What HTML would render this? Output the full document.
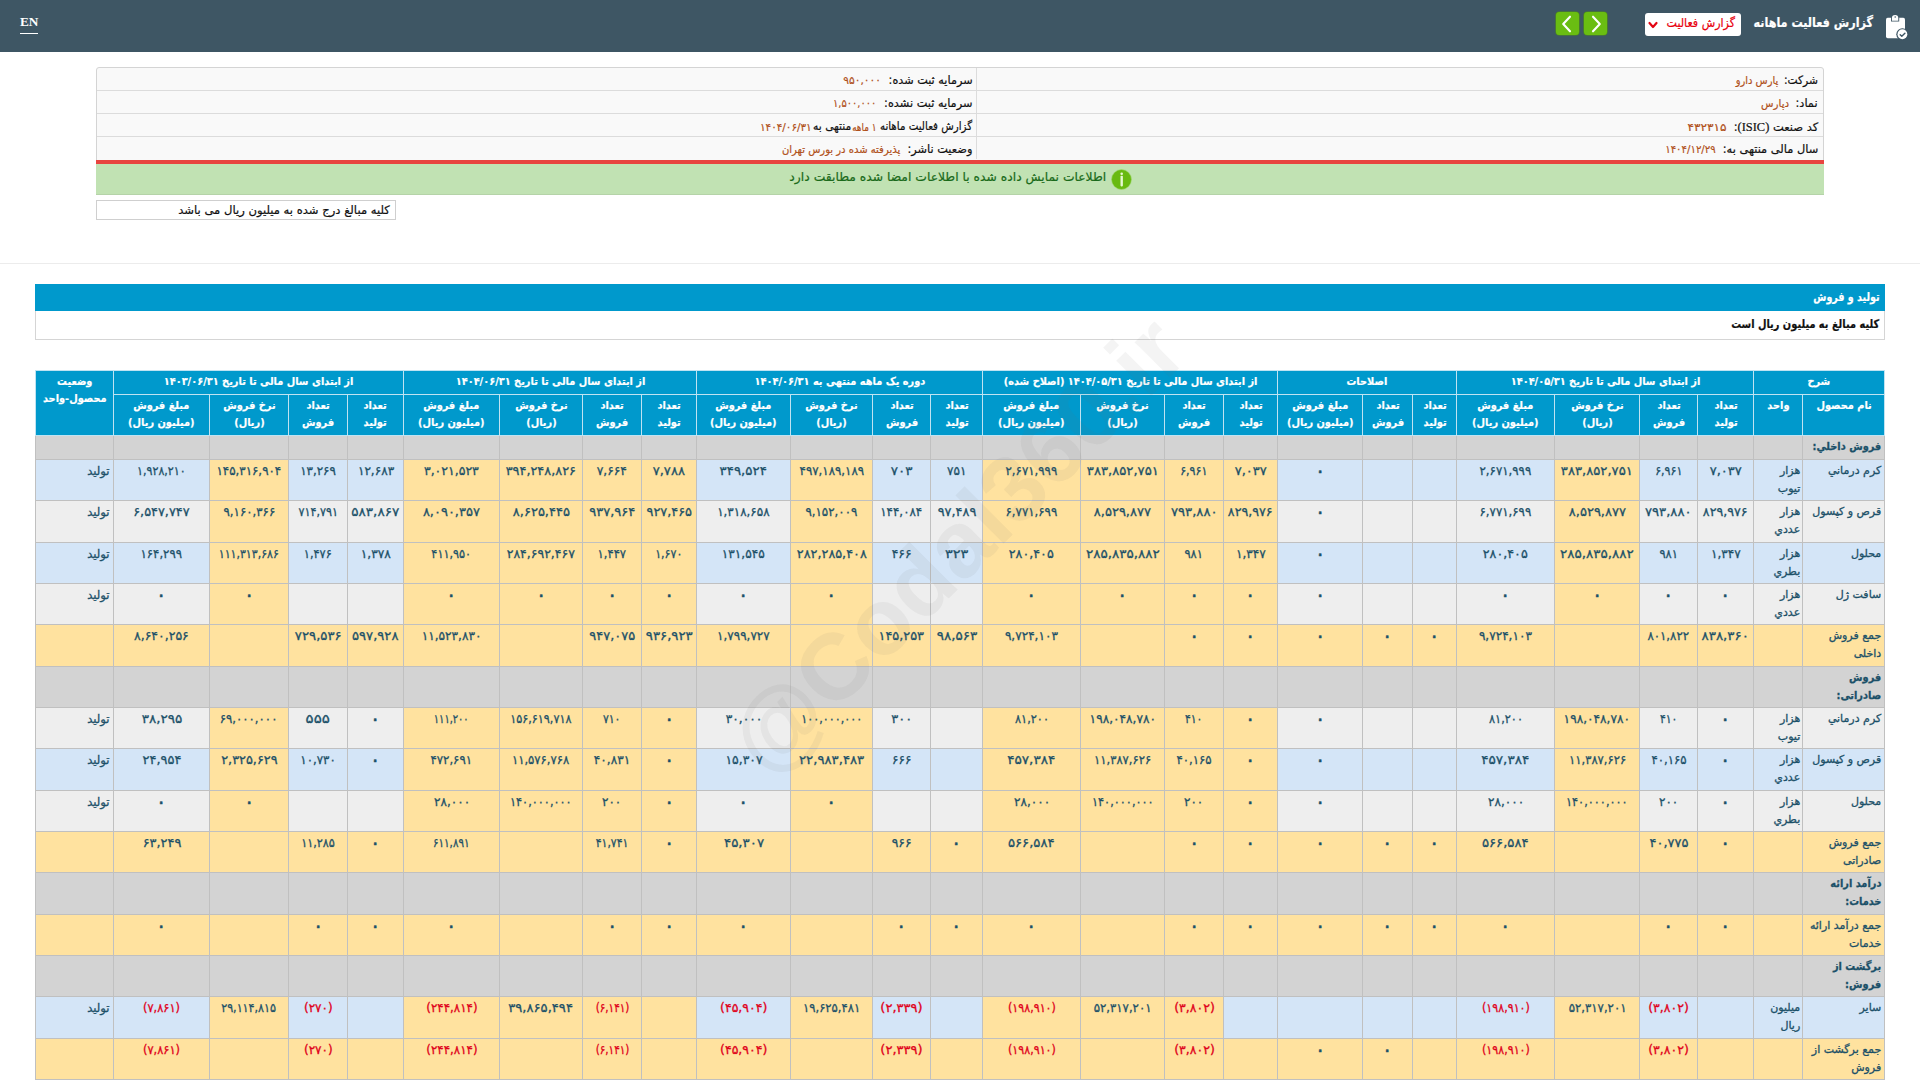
<!DOCTYPE html>
<html lang="fa" dir="rtl">
<head>
<meta charset="utf-8">
<title>گزارش فعالیت ماهانه</title>
<style>
html,body{margin:0;padding:0;background:#fff;}
body{width:1920px;height:1080px;overflow:hidden;position:relative;direction:rtl;font-family:"DejaVu Sans","Liberation Sans",sans-serif;font-size:12px;color:#000;}
.abs{position:absolute;}
.f{position:absolute;white-space:nowrap;line-height:1;transform-origin:100% 50%;direction:rtl;-webkit-text-stroke:0.2px;}
#top{left:0;top:0;width:1920px;height:51.5px;background:#3e5664;}
#sel{left:1645px;top:13px;width:96px;height:23px;background:#fff;border-radius:3px;}
.gb{top:12px;width:23px;height:23px;background:#6abd12;border-radius:3.5px;box-shadow:0 0 0 0.6px #4f8f14;}
#en{left:20px;top:13.5px;color:#fff;font-family:"Liberation Serif",serif;font-size:13.3px;font-weight:bold;line-height:16px;border-bottom:1px solid #fff;padding-bottom:3px;direction:ltr;}
#info{left:96px;top:67px;width:1728px;height:94px;background:#f9f9f9;border:1px solid #d4d4d4;box-sizing:border-box;border-radius:3px 3px 0 0;}
#info .r{position:absolute;left:0;right:0;height:23px;border-bottom:1px solid #dcdcdc;box-sizing:border-box;}
#redline{left:96px;top:160px;width:1728px;height:4px;background:#e8443f;}
#green{left:96px;top:164px;width:1728px;height:30.5px;background:#c1e2b3;border-bottom:1px solid #b5d3a8;box-sizing:border-box;}
#note{left:96px;top:200px;width:300px;height:20px;border:1px solid #cfcfcf;box-sizing:border-box;line-height:17px;font-size:11.5px;white-space:nowrap;}
#sep{left:0;top:263px;width:1920px;height:1px;background:#ececec;}
#sec{left:35px;top:284px;width:1850px;height:27px;background:#0099cc;color:#fff;font-weight:bold;line-height:26px;}
#sub{left:35px;top:311px;width:1850px;height:29px;border:1px solid #d5d5d5;border-top:none;box-sizing:border-box;font-weight:bold;line-height:28px;}
table{position:absolute;left:35px;top:370px;width:1849px;border-collapse:collapse;table-layout:fixed;direction:rtl;}
th,td{box-sizing:border-box;padding:0;overflow:hidden;}
th{background:#0099cc;color:#fff;font-weight:bold;border:1px solid #bfe3f2;text-align:center;vertical-align:top;font-size:11px;line-height:16.5px;white-space:nowrap;padding:3px 0 0 0;}
th span{display:inline-block;transform:scaleX(0.89);transform-origin:50% 50%;-webkit-text-stroke:0.2px;}
tr.h1 th{height:24px;}
tr.h2 th{height:40.5px;}
td{border:1px solid #c0c0c0;color:#1b5068;text-align:center;vertical-align:top;font-size:12px;line-height:18px;white-space:nowrap;padding:2px 2px 0 2px;height:41.33px;-webkit-text-stroke:0.3px;}
tr.h td{background:#d3d3d3;height:24.5px;font-weight:bold;}
tr.h.h2 td{height:41.33px;}
tr.b td{background:#d4e5f7;}
tr.g td{background:#eeeeee;}
tr.s td{background:#ffe29f;}
td.y{background:#ffe29f !important;}
td.neg{color:#e0001a;}
td.nm,td.un,td.st{text-align:right;font-size:11px;}
td span{display:inline-block;transform:scaleX(1.1);transform-origin:50% 50%;}
td span.z{transform:scale(1.6);}
td.nm span,td.un span,td.st span{transform:none;}
td.nm{padding-right:3px;}
td.st{padding-right:3.5px;font-size:11.6px;}
tr.h td.nm span{transform:scaleX(0.89);transform-origin:100% 50%;}
#wm{left:557px;top:475px;width:800px;height:140px;line-height:140px;text-align:center;font-family:"Liberation Sans",sans-serif;font-size:94px;font-weight:bold;color:rgba(110,110,110,0.075);transform:rotate(-45deg);direction:ltr;white-space:nowrap;pointer-events:none;}
</style>
</head>
<body>
<div id="top" class="abs">
  <div id="en" class="abs">EN</div>
  <div class="abs gb" style="left:1556px"><svg width="23" height="23" viewBox="0 0 23 23"><path d="M14 4.7 L7.2 12 L14 19.3" fill="none" stroke="#fff" stroke-width="2.1" stroke-linecap="round" stroke-linejoin="round"/></svg></div>
  <div class="abs gb" style="left:1584px"><svg width="23" height="23" viewBox="0 0 23 23"><path d="M9 4.7 L15.8 12 L9 19.3" fill="none" stroke="#fff" stroke-width="2.1" stroke-linecap="round" stroke-linejoin="round"/></svg></div>
  <div id="sel" class="abs"><svg class="abs" style="left:2.5px;top:7.5px" width="10" height="9" viewBox="0 0 10 9"><path d="M1.5 2 L5 6 L8.5 2" fill="none" stroke="#e30613" stroke-width="2.2" stroke-linecap="round" stroke-linejoin="round"/></svg></div>
  
  <svg class="abs" style="left:1884px;top:12px" width="28" height="30" viewBox="0 0 28 30"><rect x="2" y="5.7" width="19" height="20.5" rx="1.7" fill="#fff"/><path d="M7 9.6 V6.2 a4.1 4.1 0 0 1 8.2 0 V9.6 Z" fill="#3e5664"/><path d="M7.9 8.7 V6.1 a3.2 3.2 0 0 1 6.4 0 V8.7 Z" fill="#fff"/><circle cx="11.2" cy="5" r="0.75" fill="#3e5664"/><circle cx="18.4" cy="22.25" r="6.1" fill="#3e5664"/><circle cx="18.4" cy="22.25" r="4.9" fill="#fff"/><path d="M16.2 22.7 l1.6 1.5 l3.1 -3" fill="none" stroke="#3e5664" stroke-width="1.4" stroke-linecap="round" stroke-linejoin="round"/></svg>
</div>

<div id="info" class="abs">
  <div class="r" style="top:0"></div><div class="r" style="top:23px"></div><div class="r" style="top:46px"></div>
  <div class="abs" style="left:879px;top:0;width:1px;height:91px;background:#dcdcdc"></div>
</div>
<div id="redline" class="abs"></div>
<div id="green" class="abs">
  
  <svg class="abs" style="left:1014.5px;top:4.7px" width="21" height="21" viewBox="0 0 21 21"><circle cx="10.5" cy="10.5" r="10" fill="#68ba10" stroke="#a5dc7a" stroke-width="0.6"/><circle cx="10.7" cy="4.8" r="1.3" fill="#e6f8d2"/><rect x="9.5" y="6.8" width="2.4" height="10.6" rx="0.8" fill="#e6f8d2"/></svg>
</div>
<div id="note" class="abs"></div>
<div id="sep" class="abs"></div>
<div id="sec" class="abs"></div>
<div id="sub" class="abs"></div>

<table>
<colgroup><col style="width:82px"><col style="width:49px"><col style="width:56px"><col style="width:58px"><col style="width:85px"><col style="width:98px"><col style="width:44px"><col style="width:50px"><col style="width:85px"><col style="width:54px"><col style="width:59px"><col style="width:84px"><col style="width:98px"><col style="width:52px"><col style="width:58px"><col style="width:82px"><col style="width:94px"><col style="width:55px"><col style="width:59px"><col style="width:83px"><col style="width:96px"><col style="width:56px"><col style="width:59px"><col style="width:79px"><col style="width:96px"><col style="width:78px"></colgroup>
<thead>
<tr class="h1"><th colspan="2"><span>شرح</span></th><th colspan="4"><span>از ابتدای سال مالی تا تاریخ ۱۴۰۴/۰۵/۳۱</span></th><th colspan="3"><span>اصلاحات</span></th><th colspan="4"><span>از ابتدای سال مالی تا تاریخ ۱۴۰۴/۰۵/۳۱ (اصلاح شده)</span></th><th colspan="4"><span>دوره یک ماهه منتهی به ۱۴۰۴/۰۶/۳۱</span></th><th colspan="4"><span>از ابتدای سال مالی تا تاریخ ۱۴۰۴/۰۶/۳۱</span></th><th colspan="4"><span>از ابتدای سال مالی تا تاریخ ۱۴۰۳/۰۶/۳۱</span></th><th rowspan="2"><span>وضعیت<br>محصول-واحد</span></th></tr>
<tr class="h2"><th><span>نام محصول</span></th><th><span>واحد</span></th><th><span>تعداد<br>تولید</span></th><th><span>تعداد<br>فروش</span></th><th><span>نرخ فروش<br>(ریال)</span></th><th><span>مبلغ فروش<br>(میلیون ریال)</span></th><th><span>تعداد<br>تولید</span></th><th><span>تعداد<br>فروش</span></th><th><span>مبلغ فروش<br>(میلیون ریال)</span></th><th><span>تعداد<br>تولید</span></th><th><span>تعداد<br>فروش</span></th><th><span>نرخ فروش<br>(ریال)</span></th><th><span>مبلغ فروش<br>(میلیون ریال)</span></th><th><span>تعداد<br>تولید</span></th><th><span>تعداد<br>فروش</span></th><th><span>نرخ فروش<br>(ریال)</span></th><th><span>مبلغ فروش<br>(میلیون ریال)</span></th><th><span>تعداد<br>تولید</span></th><th><span>تعداد<br>فروش</span></th><th><span>نرخ فروش<br>(ریال)</span></th><th><span>مبلغ فروش<br>(میلیون ریال)</span></th><th><span>تعداد<br>تولید</span></th><th><span>تعداد<br>فروش</span></th><th><span>نرخ فروش<br>(ریال)</span></th><th><span>مبلغ فروش<br>(میلیون ریال)</span></th></tr>
</thead>
<tbody>
<tr class="h"><td class="nm"><span>فروش داخلي:</span></td><td></td><td></td><td></td><td></td><td></td><td></td><td></td><td></td><td></td><td></td><td></td><td></td><td></td><td></td><td></td><td></td><td></td><td></td><td></td><td></td><td></td><td></td><td></td><td></td><td></td></tr>
<tr class="b"><td class="nm"><span>کرم درماني</span></td><td class="un"><span>هزار<br>تیوب</span></td><td><span style="transform:scaleX(1.085)">۷,۰۳۷</span></td><td><span style="transform:scaleX(0.922)">۶,۹۶۱</span></td><td class="y"><span style="transform:scaleX(1.096)">۳۸۳,۸۵۲,۷۵۱</span></td><td><span style="transform:scaleX(0.981)">۲,۶۷۱,۹۹۹</span></td><td></td><td></td><td><span class="z">۰</span></td><td class="y"><span style="transform:scaleX(1.085)">۷,۰۳۷</span></td><td class="y"><span style="transform:scaleX(0.922)">۶,۹۶۱</span></td><td class="y"><span style="transform:scaleX(1.096)">۳۸۳,۸۵۲,۷۵۱</span></td><td class="y"><span style="transform:scaleX(0.981)">۲,۶۷۱,۹۹۹</span></td><td><span style="transform:scaleX(0.998)">۷۵۱</span></td><td><span style="transform:scaleX(1.125)">۷۰۳</span></td><td class="y"><span style="transform:scaleX(0.983)">۴۹۷,۱۸۹,۱۸۹</span></td><td><span style="transform:scaleX(1.112)">۳۴۹,۵۲۴</span></td><td class="y"><span style="transform:scaleX(1.090)">۷,۷۸۸</span></td><td class="y"><span style="transform:scaleX(1.024)">۷,۶۶۴</span></td><td class="y"><span style="transform:scaleX(1.071)">۳۹۴,۲۴۸,۸۲۶</span></td><td class="y"><span style="transform:scaleX(1.041)">۳,۰۲۱,۵۲۳</span></td><td><span style="transform:scaleX(1.005)">۱۲,۶۸۳</span></td><td><span style="transform:scaleX(0.993)">۱۳,۲۶۹</span></td><td class="y"><span style="transform:scaleX(0.988)">۱۴۵,۳۱۶,۹۰۴</span></td><td><span style="transform:scaleX(0.922)">۱,۹۲۸,۲۱۰</span></td><td class="st"><span>تولید</span></td></tr>
<tr class="g"><td class="nm"><span>قرص و کپسول</span></td><td class="un"><span>هزار<br>عددي</span></td><td><span style="transform:scaleX(1.055)">۸۲۹,۹۷۶</span></td><td><span style="transform:scaleX(1.100)">۷۹۳,۸۸۰</span></td><td class="y"><span style="transform:scaleX(1.084)">۸,۵۲۹,۸۷۷</span></td><td><span style="transform:scaleX(0.981)">۶,۷۷۱,۶۹۹</span></td><td></td><td></td><td><span class="z">۰</span></td><td class="y"><span style="transform:scaleX(1.055)">۸۲۹,۹۷۶</span></td><td class="y"><span style="transform:scaleX(1.100)">۷۹۳,۸۸۰</span></td><td class="y"><span style="transform:scaleX(1.084)">۸,۵۲۹,۸۷۷</span></td><td class="y"><span style="transform:scaleX(0.981)">۶,۷۷۱,۶۹۹</span></td><td><span style="transform:scaleX(1.074)">۹۷,۴۸۹</span></td><td><span style="transform:scaleX(0.988)">۱۴۴,۰۸۴</span></td><td class="y"><span style="transform:scaleX(0.983)">۹,۱۵۲,۰۰۹</span></td><td><span style="transform:scaleX(0.993)">۱,۳۱۸,۶۵۸</span></td><td class="y"><span style="transform:scaleX(1.071)">۹۲۷,۴۶۵</span></td><td class="y"><span style="transform:scaleX(1.086)">۹۳۷,۹۶۴</span></td><td class="y"><span style="transform:scaleX(1.083)">۸,۶۲۵,۴۴۵</span></td><td class="y"><span style="transform:scaleX(1.080)">۸,۰۹۰,۳۵۷</span></td><td><span style="transform:scaleX(1.130)">۵۸۳,۸۶۷</span></td><td><span style="transform:scaleX(0.933)">۷۱۴,۷۹۱</span></td><td class="y"><span style="transform:scaleX(0.979)">۹,۱۶۰,۳۶۶</span></td><td><span style="transform:scaleX(1.069)">۶,۵۴۷,۷۴۷</span></td><td class="st"><span>تولید</span></td></tr>
<tr class="b"><td class="nm"><span>محلول</span></td><td class="un"><span>هزار<br>بطري</span></td><td><span style="transform:scaleX(1.007)">۱,۳۴۷</span></td><td><span style="transform:scaleX(0.955)">۹۸۱</span></td><td class="y"><span style="transform:scaleX(1.124)">۲۸۵,۸۳۵,۸۸۲</span></td><td><span style="transform:scaleX(1.057)">۲۸۰,۴۰۵</span></td><td></td><td></td><td><span class="z">۰</span></td><td class="y"><span style="transform:scaleX(1.007)">۱,۳۴۷</span></td><td class="y"><span style="transform:scaleX(0.955)">۹۸۱</span></td><td class="y"><span style="transform:scaleX(1.124)">۲۸۵,۸۳۵,۸۸۲</span></td><td class="y"><span style="transform:scaleX(1.057)">۲۸۰,۴۰۵</span></td><td><span style="transform:scaleX(1.207)">۳۲۳</span></td><td><span style="transform:scaleX(1.031)">۴۶۶</span></td><td class="y"><span style="transform:scaleX(1.065)">۲۸۲,۲۸۵,۴۰۸</span></td><td><span style="transform:scaleX(1.010)">۱۳۱,۵۴۵</span></td><td class="y"><span style="transform:scaleX(0.920)">۱,۶۷۰</span></td><td class="y"><span style="transform:scaleX(0.961)">۱,۴۴۷</span></td><td class="y"><span style="transform:scaleX(1.039)">۲۸۴,۶۹۲,۴۶۷</span></td><td class="y"><span style="transform:scaleX(0.936)">۴۱۱,۹۵۰</span></td><td><span style="transform:scaleX(1.020)">۱,۳۷۸</span></td><td><span style="transform:scaleX(0.944)">۱,۴۷۶</span></td><td class="y"><span style="transform:scaleX(0.914)">۱۱۱,۳۱۳,۶۸۶</span></td><td><span style="transform:scaleX(0.975)">۱۶۴,۲۹۹</span></td><td class="st"><span>تولید</span></td></tr>
<tr class="g"><td class="nm"><span>سافت ژل</span></td><td class="un"><span>هزار<br>عددي</span></td><td><span class="z">۰</span></td><td><span class="z">۰</span></td><td class="y"><span class="z">۰</span></td><td><span class="z">۰</span></td><td></td><td></td><td><span class="z">۰</span></td><td class="y"><span class="z">۰</span></td><td class="y"><span class="z">۰</span></td><td class="y"><span class="z">۰</span></td><td class="y"><span class="z">۰</span></td><td></td><td></td><td class="y"><span class="z">۰</span></td><td><span class="z">۰</span></td><td class="y"><span class="z">۰</span></td><td class="y"><span class="z">۰</span></td><td class="y"><span class="z">۰</span></td><td class="y"><span class="z">۰</span></td><td></td><td></td><td class="y"><span class="z">۰</span></td><td><span class="z">۰</span></td><td class="st"><span>تولید</span></td></tr>
<tr class="s"><td class="nm"><span>جمع فروش<br>داخلی</span></td><td class="un"></td><td><span style="transform:scaleX(1.117)">۸۳۸,۳۶۰</span></td><td><span style="transform:scaleX(0.981)">۸۰۱,۸۲۲</span></td><td></td><td><span style="transform:scaleX(1.004)">۹,۷۲۴,۱۰۳</span></td><td><span class="z">۰</span></td><td><span class="z">۰</span></td><td><span class="z">۰</span></td><td><span class="z">۰</span></td><td><span class="z">۰</span></td><td></td><td><span style="transform:scaleX(1.004)">۹,۷۲۴,۱۰۳</span></td><td><span style="transform:scaleX(1.124)">۹۸,۵۶۳</span></td><td><span style="transform:scaleX(1.070)">۱۴۵,۲۵۳</span></td><td></td><td><span style="transform:scaleX(0.996)">۱,۷۹۹,۷۲۷</span></td><td><span style="transform:scaleX(1.106)">۹۳۶,۹۲۳</span></td><td><span style="transform:scaleX(1.078)">۹۴۷,۰۷۵</span></td><td></td><td><span style="transform:scaleX(1.010)">۱۱,۵۲۳,۸۳۰</span></td><td><span style="transform:scaleX(1.092)">۵۹۷,۹۲۸</span></td><td><span style="transform:scaleX(1.103)">۷۲۹,۵۳۶</span></td><td></td><td><span style="transform:scaleX(1.039)">۸,۶۴۰,۲۵۶</span></td><td class="st"></td></tr>
<tr class="h h2"><td class="nm"><span>فروش<br>صادراتی:</span></td><td></td><td></td><td></td><td></td><td></td><td></td><td></td><td></td><td></td><td></td><td></td><td></td><td></td><td></td><td></td><td></td><td></td><td></td><td></td><td></td><td></td><td></td><td></td><td></td><td></td></tr>
<tr class="g"><td class="nm"><span>کرم درماني</span></td><td class="un"><span>هزار<br>تیوب</span></td><td><span class="z">۰</span></td><td><span style="transform:scaleX(0.899)">۴۱۰</span></td><td class="y"><span style="transform:scaleX(1.012)">۱۹۸,۰۴۸,۷۸۰</span></td><td><span style="transform:scaleX(0.942)">۸۱,۲۰۰</span></td><td></td><td></td><td><span class="z">۰</span></td><td class="y"><span class="z">۰</span></td><td class="y"><span style="transform:scaleX(0.899)">۴۱۰</span></td><td class="y"><span style="transform:scaleX(1.012)">۱۹۸,۰۴۸,۷۸۰</span></td><td class="y"><span style="transform:scaleX(0.942)">۸۱,۲۰۰</span></td><td></td><td><span style="transform:scaleX(1.082)">۳۰۰</span></td><td class="y"><span style="transform:scaleX(0.928)">۱۰۰,۰۰۰,۰۰۰</span></td><td><span style="transform:scaleX(1.020)">۳۰,۰۰۰</span></td><td class="y"><span class="z">۰</span></td><td class="y"><span style="transform:scaleX(0.906)">۷۱۰</span></td><td class="y"><span style="transform:scaleX(0.934)">۱۵۶,۶۱۹,۷۱۸</span></td><td class="y"><span style="transform:scaleX(0.819)">۱۱۱,۲۰۰</span></td><td><span class="z">۰</span></td><td><span style="transform:scaleX(1.252)">۵۵۵</span></td><td class="y"><span style="transform:scaleX(0.974)">۶۹,۰۰۰,۰۰۰</span></td><td><span style="transform:scaleX(1.128)">۳۸,۲۹۵</span></td><td class="st"><span>تولید</span></td></tr>
<tr class="b"><td class="nm"><span>قرص و کپسول</span></td><td class="un"><span>هزار<br>عددي</span></td><td><span class="z">۰</span></td><td><span style="transform:scaleX(0.976)">۴۰,۱۶۵</span></td><td class="y"><span style="transform:scaleX(0.965)">۱۱,۳۸۷,۶۲۶</span></td><td><span style="transform:scaleX(1.133)">۴۵۷,۳۸۴</span></td><td></td><td></td><td><span class="z">۰</span></td><td class="y"><span class="z">۰</span></td><td class="y"><span style="transform:scaleX(0.976)">۴۰,۱۶۵</span></td><td class="y"><span style="transform:scaleX(0.965)">۱۱,۳۸۷,۶۲۶</span></td><td class="y"><span style="transform:scaleX(1.133)">۴۵۷,۳۸۴</span></td><td></td><td><span style="transform:scaleX(1.005)">۶۶۶</span></td><td class="y"><span style="transform:scaleX(1.101)">۲۲,۹۸۳,۴۸۳</span></td><td><span style="transform:scaleX(1.031)">۱۵,۳۰۷</span></td><td class="y"><span class="z">۰</span></td><td class="y"><span style="transform:scaleX(1.009)">۴۰,۸۳۱</span></td><td class="y"><span style="transform:scaleX(0.969)">۱۱,۵۷۶,۷۶۸</span></td><td class="y"><span style="transform:scaleX(0.978)">۴۷۲,۶۹۱</span></td><td><span class="z">۰</span></td><td><span style="transform:scaleX(0.982)">۱۰,۷۳۰</span></td><td class="y"><span style="transform:scaleX(1.067)">۲,۳۲۵,۶۲۹</span></td><td><span style="transform:scaleX(1.079)">۲۴,۹۵۴</span></td><td class="st"><span>تولید</span></td></tr>
<tr class="g"><td class="nm"><span>محلول</span></td><td class="un"><span>هزار<br>بطري</span></td><td><span class="z">۰</span></td><td><span style="transform:scaleX(0.994)">۲۰۰</span></td><td class="y"><span style="transform:scaleX(0.939)">۱۴۰,۰۰۰,۰۰۰</span></td><td><span style="transform:scaleX(1.003)">۲۸,۰۰۰</span></td><td></td><td></td><td><span class="z">۰</span></td><td class="y"><span class="z">۰</span></td><td class="y"><span style="transform:scaleX(0.994)">۲۰۰</span></td><td class="y"><span style="transform:scaleX(0.939)">۱۴۰,۰۰۰,۰۰۰</span></td><td class="y"><span style="transform:scaleX(1.003)">۲۸,۰۰۰</span></td><td></td><td></td><td class="y"><span class="z">۰</span></td><td><span class="z">۰</span></td><td class="y"><span class="z">۰</span></td><td class="y"><span style="transform:scaleX(0.994)">۲۰۰</span></td><td class="y"><span style="transform:scaleX(0.939)">۱۴۰,۰۰۰,۰۰۰</span></td><td class="y"><span style="transform:scaleX(1.003)">۲۸,۰۰۰</span></td><td></td><td></td><td class="y"><span class="z">۰</span></td><td><span class="z">۰</span></td><td class="st"><span>تولید</span></td></tr>
<tr class="s"><td class="nm"><span>جمع فروش<br>صادراتی</span></td><td class="un"></td><td><span class="z">۰</span></td><td><span style="transform:scaleX(1.077)">۴۰,۷۷۵</span></td><td></td><td><span style="transform:scaleX(1.099)">۵۶۶,۵۸۴</span></td><td><span class="z">۰</span></td><td><span class="z">۰</span></td><td><span class="z">۰</span></td><td><span class="z">۰</span></td><td><span class="z">۰</span></td><td></td><td><span style="transform:scaleX(1.099)">۵۶۶,۵۸۴</span></td><td><span class="z">۰</span></td><td><span style="transform:scaleX(1.031)">۹۶۶</span></td><td></td><td><span style="transform:scaleX(1.111)">۴۵,۳۰۷</span></td><td><span class="z">۰</span></td><td><span style="transform:scaleX(0.903)">۴۱,۷۴۱</span></td><td></td><td><span style="transform:scaleX(0.857)">۶۱۱,۸۹۱</span></td><td><span class="z">۰</span></td><td><span style="transform:scaleX(0.931)">۱۱,۲۸۵</span></td><td></td><td><span style="transform:scaleX(1.073)">۶۳,۲۴۹</span></td><td class="st"></td></tr>
<tr class="h h2"><td class="nm"><span>درآمد ارائه<br>خدمات:</span></td><td></td><td></td><td></td><td></td><td></td><td></td><td></td><td></td><td></td><td></td><td></td><td></td><td></td><td></td><td></td><td></td><td></td><td></td><td></td><td></td><td></td><td></td><td></td><td></td><td></td></tr>
<tr class="s"><td class="nm"><span>جمع درآمد ارائه<br>خدمات</span></td><td class="un"></td><td><span class="z">۰</span></td><td><span class="z">۰</span></td><td></td><td><span class="z">۰</span></td><td><span class="z">۰</span></td><td><span class="z">۰</span></td><td><span class="z">۰</span></td><td><span class="z">۰</span></td><td><span class="z">۰</span></td><td></td><td><span class="z">۰</span></td><td><span class="z">۰</span></td><td><span class="z">۰</span></td><td></td><td><span class="z">۰</span></td><td><span class="z">۰</span></td><td><span class="z">۰</span></td><td></td><td><span class="z">۰</span></td><td><span class="z">۰</span></td><td><span class="z">۰</span></td><td></td><td><span class="z">۰</span></td><td class="st"></td></tr>
<tr class="h h2"><td class="nm"><span>برگشت از<br>فروش:</span></td><td></td><td></td><td></td><td></td><td></td><td></td><td></td><td></td><td></td><td></td><td></td><td></td><td></td><td></td><td></td><td></td><td></td><td></td><td></td><td></td><td></td><td></td><td></td><td></td><td></td></tr>
<tr class="b"><td class="nm"><span>سایر</span></td><td class="un"><span>میلیون<br>ریال</span></td><td></td><td class="neg"><span style="transform:scaleX(1.044)">(۳,۸۰۲)</span></td><td class="y"><span style="transform:scaleX(0.976)">۵۲,۳۱۷,۲۰۱</span></td><td class="neg"><span style="transform:scaleX(0.923)">(۱۹۸,۹۱۰)</span></td><td></td><td></td><td></td><td></td><td class="y neg"><span style="transform:scaleX(1.044)">(۳,۸۰۲)</span></td><td class="y"><span style="transform:scaleX(0.976)">۵۲,۳۱۷,۲۰۱</span></td><td class="y neg"><span style="transform:scaleX(0.923)">(۱۹۸,۹۱۰)</span></td><td></td><td class="neg"><span style="transform:scaleX(1.087)">(۲,۳۳۹)</span></td><td class="y"><span style="transform:scaleX(0.967)">۱۹,۶۲۵,۴۸۱</span></td><td class="neg"><span style="transform:scaleX(1.043)">(۴۵,۹۰۴)</span></td><td class="y"></td><td class="y neg"><span style="transform:scaleX(0.865)">(۶,۱۴۱)</span></td><td class="y"><span style="transform:scaleX(1.093)">۳۹,۸۶۵,۴۹۴</span></td><td class="y neg"><span style="transform:scaleX(0.986)">(۲۴۴,۸۱۴)</span></td><td></td><td class="neg"><span style="transform:scaleX(1.005)">(۲۷۰)</span></td><td class="y"><span style="transform:scaleX(0.927)">۲۹,۱۱۴,۸۱۵</span></td><td class="neg"><span style="transform:scaleX(0.953)">(۷,۸۶۱)</span></td><td class="st"><span>تولید</span></td></tr>
<tr class="s"><td class="nm"><span>جمع برگشت از<br>فروش</span></td><td class="un"></td><td></td><td class="neg"><span style="transform:scaleX(1.044)">(۳,۸۰۲)</span></td><td></td><td class="neg"><span style="transform:scaleX(0.923)">(۱۹۸,۹۱۰)</span></td><td></td><td><span class="z">۰</span></td><td><span class="z">۰</span></td><td></td><td class="neg"><span style="transform:scaleX(1.044)">(۳,۸۰۲)</span></td><td></td><td class="neg"><span style="transform:scaleX(0.923)">(۱۹۸,۹۱۰)</span></td><td></td><td class="neg"><span style="transform:scaleX(1.087)">(۲,۳۳۹)</span></td><td></td><td class="neg"><span style="transform:scaleX(1.043)">(۴۵,۹۰۴)</span></td><td></td><td class="neg"><span style="transform:scaleX(0.865)">(۶,۱۴۱)</span></td><td></td><td class="neg"><span style="transform:scaleX(0.986)">(۲۴۴,۸۱۴)</span></td><td></td><td class="neg"><span style="transform:scaleX(1.005)">(۲۷۰)</span></td><td></td><td class="neg"><span style="transform:scaleX(0.953)">(۷,۸۶۱)</span></td><td class="st"></td></tr>
</tbody>
</table>
<div id="f_title" class="f" style="right:47.4px;top:16.3px;font-size:13.4px;font-weight:bold;color:#fff;transform:scaleX(0.836)">گزارش فعالیت ماهانه</div>
<div id="f_sel" class="f" style="right:185.2px;top:17.2px;font-size:12.3px;color:#e8000d;transform:scaleX(0.901)">گزارش فعالیت</div>
<div id="f_l1" class="f" style="right:102.0px;top:74.7px;font-size:11.6px;color:#111;transform:scaleX(0.921)">شرکت:</div>
<div id="f_v1" class="f" style="right:142.0px;top:75.2px;font-size:11px;color:#b0501a;transform:scaleX(0.900)">پارس دارو</div>
<div id="f_l2" class="f" style="right:102.0px;top:97.6px;font-size:11.6px;color:#111;transform:scaleX(0.976)">نماد:</div>
<div id="f_v2" class="f" style="right:131.0px;top:98.1px;font-size:11px;color:#b0501a;transform:scaleX(0.931)">دپارس</div>
<div id="f_l3" class="f" style="right:102.0px;top:121.0px;font-size:11.6px;color:#111;transform:scaleX(0.992)">کد صنعت <span style='font-family:"Liberation Serif",serif;font-size:12.5px'>(ISIC)</span>:</div>
<div id="f_v3" class="f" style="right:193.5px;top:121.5px;font-size:11px;color:#b0501a;transform:scaleX(1.100)">۴۳۲۳۱۵</div>
<div id="f_l4" class="f" style="right:102.0px;top:143.9px;font-size:11.6px;color:#111;transform:scaleX(0.982)">سال مالی منتهی به:</div>
<div id="f_v4" class="f" style="right:204.5px;top:144.4px;font-size:11px;color:#b0501a;transform:scaleX(0.923)">۱۴۰۴/۱۲/۲۹</div>
<div id="f_l5" class="f" style="right:947.7px;top:74.7px;font-size:11.6px;color:#111;transform:scaleX(0.970)">سرمایه ثبت شده:</div>
<div id="f_v5" class="f" style="right:1039.0px;top:75.2px;font-size:11px;color:#b0501a;transform:scaleX(0.968)">۹۵۰,۰۰۰</div>
<div id="f_l6" class="f" style="right:947.7px;top:97.6px;font-size:11.6px;color:#111;transform:scaleX(0.977)">سرمایه ثبت نشده:</div>
<div id="f_v6" class="f" style="right:1043.3px;top:98.1px;font-size:11px;color:#b0501a;transform:scaleX(0.897)">۱,۵۰۰,۰۰۰</div>
<div id="f_l7" class="f" style="right:947.7px;top:121.0px;font-size:11.6px;color:#111;transform:scaleX(0.886)">گزارش فعالیت ماهانه</div>
<div id="f_v7" class="f" style="right:1043.3px;top:121.5px;font-size:11px;color:#b0501a;transform:scaleX(0.797)">۱ ماهه</div>
<div id="f_l7b" class="f" style="right:1068.3px;top:121.0px;font-size:11.6px;color:#111;transform:scaleX(0.929)">منتهی به</div>
<div id="f_v7b" class="f" style="right:1108.3px;top:121.5px;font-size:11px;color:#b0501a;transform:scaleX(0.945)">۱۴۰۴/۰۶/۳۱</div>
<div id="f_l8" class="f" style="right:947.7px;top:143.9px;font-size:11.6px;color:#111;transform:scaleX(0.979)">وضعیت ناشر:</div>
<div id="f_v8" class="f" style="right:1020.0px;top:144.4px;font-size:11px;color:#b0501a;transform:scaleX(0.908)">پذیرفته شده در بورس تهران</div>
<div id="f_green" class="f" style="right:814.1px;top:171.4px;font-size:12.3px;color:#1a6a1a;transform:scaleX(1.002)">اطلاعات نمایش داده شده با اطلاعات امضا شده مطابقت دارد</div>
<div id="f_note" class="f" style="right:1530.1px;top:205.0px;font-size:11.6px;color:#111;transform:scaleX(0.999)">کلیه مبالغ درج شده به میلیون ریال می باشد</div>
<div id="f_sec" class="f" style="right:40.0px;top:291.0px;font-size:12px;font-weight:bold;color:#fff;transform:scaleX(0.793)">تولید و فروش</div>
<div id="f_sub" class="f" style="right:41.2px;top:318.4px;font-size:12px;font-weight:bold;color:#111;transform:scaleX(0.817)">کلیه مبالغ به میلیون ریال است</div>
<div id="wm" class="abs">@Codal360.ir</div>
</body>
</html>
